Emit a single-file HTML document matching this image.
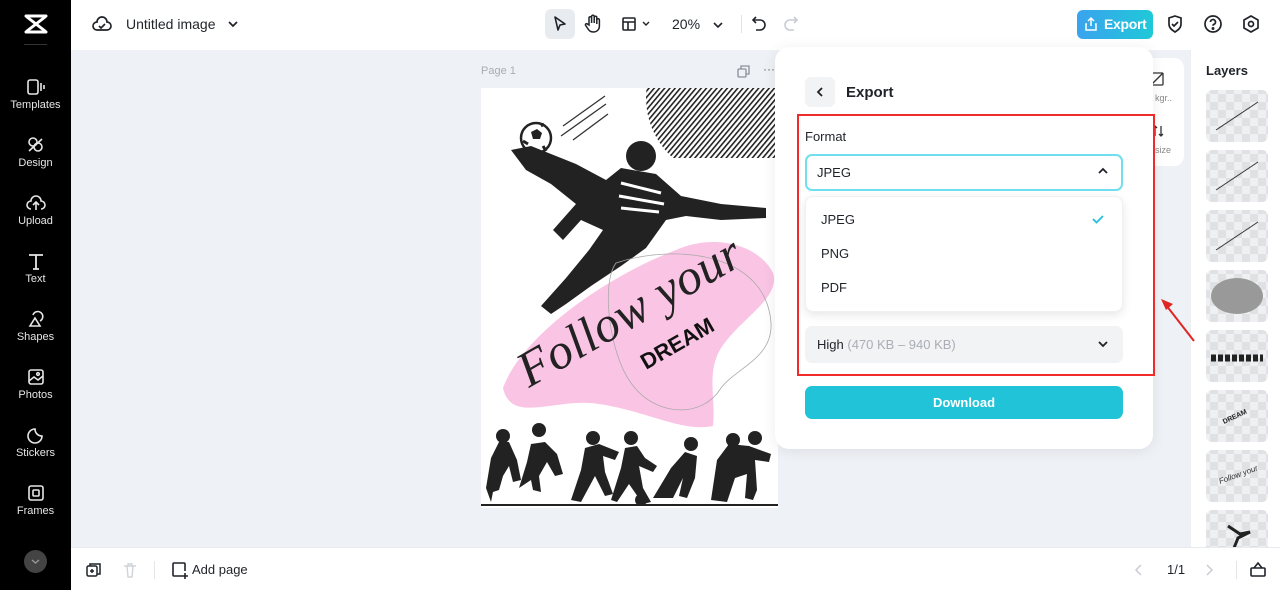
<!DOCTYPE html>
<html><head><meta charset="utf-8">
<style>
*{box-sizing:border-box;margin:0;padding:0}
body{width:1280px;height:595px;overflow:hidden;background:#fff;font-family:"Liberation Sans",sans-serif;position:relative;color:#1f2329}
.abs{position:absolute}
#side{left:0;top:0;width:71px;height:590px;background:#000}
.si{position:absolute;left:0;width:71px;text-align:center;color:#e6e6e6;font-size:11px}
.si svg{display:block;margin:0 auto 3px}
#top{left:71px;top:0;width:1209px;height:50px;background:#fff}
#canvas{left:71px;top:50px;width:1119px;height:497px;background:#eef1f5}
#bottom{left:71px;top:547px;width:1209px;height:48px;background:#fff;border-top:1px solid #e8eaed}
#layers{left:1190px;top:50px;width:90px;height:497px;background:#fff;border-left:1px solid #eceef1}
.th{position:absolute;left:15px;width:62px;height:52px;border-radius:6px;background-color:#eef0f2;
background-image:linear-gradient(45deg,#dfe1e4 25%,transparent 25%,transparent 75%,#dfe1e4 75%),linear-gradient(45deg,#dfe1e4 25%,transparent 25%,transparent 75%,#dfe1e4 75%);
background-size:16px 16px;background-position:4px 4px,12px 12px;overflow:hidden}
#panel{left:775px;top:47px;width:378px;height:402px;background:#fff;border-radius:14px;box-shadow:0 2px 14px rgba(0,0,0,.08)}
</style></head><body>

<div id="side" class="abs">
  <svg class="abs" style="left:23px;top:13px" width="26" height="22" viewBox="0 0 26 22"><path d="M3 3h20M3 19h20M4 4l18 14M22 4L4 18" fill="none" stroke="#fff" stroke-width="3" stroke-linecap="round"/></svg>
  <div class="abs" style="left:24px;top:44px;width:23px;height:1px;background:#333"></div>
  <div class="si" style="top:78px"><svg width="20" height="18" viewBox="0 0 20 18" fill="none" stroke="#e6e6e6" stroke-width="1.6"><rect x="2" y="2" width="10" height="14" rx="2"/><path d="M15 5v8M18 7v4"/></svg>Templates</div>
  <div class="si" style="top:136px"><svg width="20" height="18" viewBox="0 0 20 18" fill="none" stroke="#e6e6e6" stroke-width="1.6"><circle cx="7" cy="6" r="4"/><circle cx="12" cy="11" r="4"/><path d="M3 15l13-12"/></svg>Design</div>
  <div class="si" style="top:194px"><svg width="22" height="18" viewBox="0 0 22 18" fill="none" stroke="#e6e6e6" stroke-width="1.6"><path d="M6 15a4 4 0 0 1 0-8 5 5 0 0 1 10 0 4 4 0 0 1 0 8"/><path d="M11 16V9M8 11l3-3 3 3"/></svg>Upload</div>
  <div class="si" style="top:252px"><svg width="20" height="18" viewBox="0 0 20 18" fill="none" stroke="#e6e6e6" stroke-width="1.8"><path d="M3 3h14M10 3v14M7 17h6"/></svg>Text</div>
  <div class="si" style="top:310px"><svg width="20" height="18" viewBox="0 0 20 18" fill="none" stroke="#e6e6e6" stroke-width="1.6"><path d="M7 5a5 5 0 1 1 7 6"/><path d="M9 8l5 8H4z"/></svg>Shapes</div>
  <div class="si" style="top:368px"><svg width="20" height="18" viewBox="0 0 20 18" fill="none" stroke="#e6e6e6" stroke-width="1.6"><rect x="3" y="2" width="14" height="14" rx="2"/><path d="M3 13l5-4 4 3 5-4"/><circle cx="12" cy="6" r="1.3"/></svg>Photos</div>
  <div class="si" style="top:426px"><svg width="20" height="18" viewBox="0 0 20 18" fill="none" stroke="#e6e6e6" stroke-width="1.6"><path d="M16 10a7 7 0 1 1-7-7c0 4 3 7 7 7z"/></svg>Stickers</div>
  <div class="si" style="top:484px"><svg width="20" height="18" viewBox="0 0 20 18" fill="none" stroke="#e6e6e6" stroke-width="1.6"><rect x="3" y="2" width="14" height="14" rx="2"/><rect x="7" y="6" width="6" height="6" rx="1"/></svg>Frames</div>
  <div class="abs" style="left:24px;top:550px;width:23px;height:23px;border-radius:50%;background:#444"><svg width="23" height="23" viewBox="0 0 23 23"><path d="M8 10l3.5 3 3.5-3" fill="none" stroke="#999" stroke-width="1.4"/></svg></div>
</div>
<div class="abs" style="left:71px;top:272px;width:7px;height:48px;background:#2a2a2a;border-radius:0 6px 6px 0"></div>

<div id="top" class="abs">
  <svg class="abs" style="left:20px;top:15px" width="22" height="18" viewBox="0 0 22 18" fill="none" stroke="#1f2329" stroke-width="1.7"><path d="M6 15a4 4 0 0 1 0-8 5 5 0 0 1 10 0 4 4 0 0 1 0 8z"/><path d="M8 11l2 2 4-4"/></svg>
  <div class="abs" style="left:55px;top:16px;font-size:14px;color:#1f2329">Untitled image</div>
  <svg class="abs" style="left:156px;top:18px" width="12" height="12" viewBox="0 0 12 12"><path d="M2 4l4 4 4-4" fill="none" stroke="#1f2329" stroke-width="1.7"/></svg>
  <div class="abs" style="left:474px;top:9px;width:30px;height:30px;border-radius:6px;background:#e8ebef"></div>
  <svg class="abs" style="left:481px;top:15px" width="16" height="18" viewBox="0 0 16 18"><path d="M3 2l10 7-5 1-2 5z" fill="none" stroke="#1f2329" stroke-width="1.6" stroke-linejoin="round"/></svg>
  <svg class="abs" style="left:513px;top:14px" width="18" height="20" viewBox="0 0 18 20" fill="none" stroke="#1f2329" stroke-width="1.5"><path d="M5 11V4a1.3 1.3 0 0 1 2.6 0v5V2.5a1.3 1.3 0 0 1 2.6 0V9V3.5a1.3 1.3 0 0 1 2.6 0V10V6a1.3 1.3 0 0 1 2.6 0v6c0 4-3 6-6 6s-4-1-6-4l-2-3a1.2 1.2 0 0 1 2-1z"/></svg>
  <svg class="abs" style="left:550px;top:16px" width="16" height="16" viewBox="0 0 16 16" fill="none" stroke="#1f2329" stroke-width="1.6"><rect x="2" y="2" width="12" height="12" rx="1"/><path d="M2 6h12M7 6v8"/></svg>
  <svg class="abs" style="left:570px;top:19px" width="10" height="10" viewBox="0 0 10 10"><path d="M2 3l3 3 3-3" fill="none" stroke="#1f2329" stroke-width="1.4"/></svg>
  <div class="abs" style="left:601px;top:16px;font-size:14px">20%</div>
  <svg class="abs" style="left:641px;top:19px" width="12" height="12" viewBox="0 0 12 12"><path d="M2 4l4 4 4-4" fill="none" stroke="#1f2329" stroke-width="1.6"/></svg>
  <div class="abs" style="left:670px;top:15px;width:1px;height:18px;background:#e0e3e7"></div>
  <svg class="abs" style="left:680px;top:15px" width="16" height="18" viewBox="0 0 16 18" fill="none" stroke="#1f2329" stroke-width="1.6"><path d="M5 2L2 5l3 3"/><path d="M2 5h7a5 5 0 0 1 0 10H5"/></svg>
  <svg class="abs" style="left:712px;top:15px" width="16" height="18" viewBox="0 0 16 18" fill="none" stroke="#c8ccd2" stroke-width="1.6"><path d="M11 2l3 3-3 3"/><path d="M14 5H7a5 5 0 0 0 0 10h4"/></svg>
  <div class="abs" style="left:1006px;top:10px;width:76px;height:29px;border-radius:6px;background:linear-gradient(90deg,#3aa3ee,#1fc8d8);color:#fff;font-size:14px;font-weight:bold;padding:6px 0 0 27px;letter-spacing:-0.3px">Export</div>
  <svg class="abs" style="left:1013px;top:16px" width="14" height="16" viewBox="0 0 14 16" fill="none" stroke="#fff" stroke-width="1.5"><path d="M7 10V2M4 5l3-3 3 3M3 8H2v6h10V8h-1"/></svg>
  <svg class="abs" style="left:1095px;top:14px" width="18" height="20" viewBox="0 0 18 20" fill="none" stroke="#1f2329" stroke-width="1.7"><path d="M9 2l6 2v6c0 4-3 6-6 8-3-2-6-4-6-8V4z"/><path d="M6 10l2 2 4-4"/></svg>
  <svg class="abs" style="left:1132px;top:14px" width="20" height="20" viewBox="0 0 20 20" fill="none" stroke="#1f2329" stroke-width="1.7"><circle cx="10" cy="10" r="8"/><path d="M7.5 8a2.5 2.5 0 1 1 3.5 2.3c-.7.3-1 .8-1 1.5"/><circle cx="10" cy="14.5" r=".6" fill="#1f2329"/></svg>
  <svg class="abs" style="left:1170px;top:14px" width="20" height="20" viewBox="0 0 20 20" fill="none" stroke="#1f2329" stroke-width="1.7"><path d="M10 2l7 4v8l-7 4-7-4V6z"/><circle cx="10" cy="10" r="2.5"/></svg>
</div>

<div id="canvas" class="abs"></div>
<div class="abs" style="left:481px;top:65px;font-size:11px;color:#a8adb5">Page 1</div>
<svg class="abs" style="left:737px;top:65px" width="13" height="13" viewBox="0 0 13 13" fill="none" stroke="#8a9099" stroke-width="1.3"><rect x="1" y="4" width="8" height="8" rx="1"/><path d="M4 4V1h8v8H9"/></svg>
<div class="abs" style="left:763px;top:62px;font-size:12px;color:#666">···</div>

<svg class="abs" style="left:481px;top:88px" width="297" height="420" viewBox="0 0 297 420">
 <rect width="297" height="420" fill="#fff"/>
 <defs><pattern id="st" width="4" height="4" patternUnits="userSpaceOnUse" patternTransform="rotate(40)"><rect width="1.6" height="4" fill="#222"/></pattern>
 <clipPath id="cc"><circle cx="245" cy="10" r="80"/></clipPath></defs>
 <rect x="160" y="0" width="137" height="70" fill="url(#st)" clip-path="url(#cc)"/>
 <path d="M82 38l42-30M80 48l45-32M92 52l35-26" stroke="#333" stroke-width="1.3"/>
 <circle cx="55" cy="50" r="15" fill="#fff" stroke="#222" stroke-width="2.5"/>
 <path d="M50 44l6-3 5 4-2 6h-7z" fill="#222"/>
 <path d="M42 53l5 3M62 58l3 5M60 38l3-2" stroke="#222" stroke-width="3"/>
 <path d="M30 62L50 58L95 76L125 92L140 80L175 86L200 108L240 116L285 120L285 130L240 132L205 128L185 132L165 160L140 178L110 198L85 216L70 226L60 218L85 190L108 162L122 142L100 132L82 152L72 142L95 116L70 96L45 82Z" fill="#222"/>
 <path d="M140 95l40 10M138 108l45 8M140 120l38 4" stroke="#fff" stroke-width="3"/>
 <circle cx="160" cy="68" r="15" fill="#222"/>
 <path d="M22 300C40 250 120 190 200 160C240 145 280 160 292 185C300 210 260 230 240 260C225 285 235 310 232 338C200 345 160 320 110 315C70 312 30 335 22 300Z" fill="#fac4e4"/>
 <path d="M135 175c60-20 150-10 155 60 2 35-35 45-50 65-18 30-65 30-90-5-22-30-30-100-15-120z" fill="none" stroke="#aaa" stroke-width=".8"/>
 <text x="48" y="300" transform="rotate(-30 48 300)" font-family="Liberation Serif,serif" font-style="italic" font-size="50" fill="#222" textLength="250">Follow your</text>
 <text x="165" y="282" transform="rotate(-30 165 282)" font-family="Liberation Sans,sans-serif" font-weight="bold" font-size="22" fill="#111">DREAM</text>
 <g fill="#222">
  <circle cx="22" cy="348" r="7"/><path d="M5 400l5-30 8-16h10l8 18 4 20-8 2-4-16-6 10-4 14-6 2-2 10z"/>
  <circle cx="58" cy="342" r="7"/><path d="M38 400l8-26 4-18 14-2 12 12 6 20-8 2-8-14-8 14 2 16-8-2-2-10z"/>
  <circle cx="112" cy="350" r="7"/><path d="M90 412l10-30 4-22 14-4 20 8-4 8-12-4 2 16 8 22-8 2-10-20-14 26z"/>
  <circle cx="150" cy="350" r="7"/><path d="M130 412l10-32 4-20 12-2 8 12 12 8-4 6-14-6 4 22 8 14-8 2-14-20-12 18z"/>
  <circle cx="160" cy="412" r="6"/>
  <circle cx="210" cy="356" r="7"/><path d="M172 410l18-30 14-16 12 4-2 22-8 20-8-2 4-18-10 20z"/>
  <circle cx="252" cy="352" r="7"/><circle cx="274" cy="350" r="7"/>
  <path d="M230 412l6-40 12-16 20 2 22 8-2 8-14-2 2 30-4 10-8-2 2-24-12 4-8 24z"/>
  <rect x="0" y="416" width="297" height="2"/>
 </g>
</svg>

<div id="layers" class="abs">
  <div class="abs" style="left:15px;top:13px;font-size:13px;font-weight:bold;color:#1f2329">Layers</div>
  <div class="th" style="top:40px"><svg width="62" height="52"><path d="M10 40l42-28" stroke="#333" stroke-width="1"/></svg></div>
  <div class="th" style="top:100px"><svg width="62" height="52"><path d="M10 40l42-28" stroke="#333" stroke-width="1"/></svg></div>
  <div class="th" style="top:160px"><svg width="62" height="52"><path d="M10 40l42-28" stroke="#333" stroke-width="1"/></svg></div>
  <div class="th" style="top:220px"><svg width="62" height="52"><ellipse cx="31" cy="26" rx="26" ry="18" fill="#999"/></svg></div>
  <div class="th" style="top:280px"><svg width="62" height="52"><path d="M5 28h52" stroke="#222" stroke-width="7" stroke-dasharray="5 2"/></svg></div>
  <div class="th" style="top:340px"><svg width="62" height="52"><text x="18" y="34" transform="rotate(-25 18 34)" font-size="7" font-weight="bold" fill="#222">DREAM</text></svg></div>
  <div class="th" style="top:400px"><svg width="62" height="52"><text x="14" y="34" transform="rotate(-20 14 34)" font-size="8" font-style="italic" fill="#333">Follow your</text></svg></div>
  <div class="th" style="top:460px"><svg width="62" height="52"><path d="M22 16l12 8 10-2-12 6-4 10" stroke="#222" stroke-width="3" fill="none"/></svg></div>
</div>

<div class="abs" style="left:1130px;top:58px;width:54px;height:108px;background:#fff;border-radius:10px"></div>
<svg class="abs" style="left:1150px;top:72px" width="14" height="14" viewBox="0 0 14 14" fill="none" stroke="#333" stroke-width="1.3"><rect x="1" y="1" width="12" height="12" rx="1"/><path d="M1 13L13 1"/></svg>
<div class="abs" style="left:1155px;top:93px;font-size:9px;color:#888">kgr..</div>
<svg class="abs" style="left:1152px;top:124px" width="12" height="14" viewBox="0 0 12 14" fill="none" stroke="#333" stroke-width="1.3"><path d="M3 2v10M1 4l2-2 2 2M9 2v10M7 10l2 2 2-2"/></svg>
<div class="abs" style="left:1155px;top:145px;font-size:9px;color:#888">size</div>

<div id="panel" class="abs">
  <div class="abs" style="left:30px;top:30px;width:30px;height:30px;border-radius:6px;background:#f1f3f5"></div>
  <svg class="abs" style="left:40px;top:39px" width="10" height="12" viewBox="0 0 10 12"><path d="M7 2L3 6l4 4" fill="none" stroke="#1f2329" stroke-width="1.8"/></svg>
  <div class="abs" style="left:71px;top:37px;font-size:15px;font-weight:bold;color:#1f2329">Export</div>
  <div class="abs" style="left:30px;top:82px;font-size:13px;color:#1f2329">Format</div>
  <div class="abs" style="left:30px;top:107px;width:318px;height:37px;border:2px solid #6fdff0;border-radius:7px"></div>
  <div class="abs" style="left:42px;top:118px;font-size:13px;color:#1f2329">JPEG</div>
  <svg class="abs" style="left:322px;top:119px" width="12" height="10" viewBox="0 0 12 10"><path d="M2 7l4-4 4 4" fill="none" stroke="#1f2329" stroke-width="1.8"/></svg>
  <div class="abs" style="left:30px;top:214px;font-size:13px;color:#1f2329">Quality</div>
  <div class="abs" style="left:30px;top:279px;width:318px;height:37px;background:#f1f3f5;border-radius:7px"></div>
  <div class="abs" style="left:42px;top:290px;font-size:13px;color:#1f2329">High <span style="color:#a9aeb5">(470 KB – 940 KB)</span></div>
  <svg class="abs" style="left:322px;top:292px" width="12" height="10" viewBox="0 0 12 10"><path d="M2 3l4 4 4-4" fill="none" stroke="#1f2329" stroke-width="1.8"/></svg>
  <div class="abs" style="left:30px;top:149px;width:318px;height:116px;background:#fff;border-radius:8px;box-shadow:0 3px 10px rgba(0,0,0,.1);border:1px solid #eef0f2"></div>
  <div class="abs" style="left:46px;top:165px;font-size:13px;color:#1f2329">JPEG</div>
  <svg class="abs" style="left:316px;top:166px" width="14" height="12" viewBox="0 0 14 12"><path d="M2 6l3.5 3.5L12 3" fill="none" stroke="#1fc2d8" stroke-width="1.8"/></svg>
  <div class="abs" style="left:46px;top:199px;font-size:13px;color:#1f2329">PNG</div>
  <div class="abs" style="left:46px;top:233px;font-size:13px;color:#1f2329">PDF</div>
  <div class="abs" style="left:30px;top:339px;width:318px;height:33px;background:#20c3d7;border-radius:7px;color:#fff;font-size:13px;font-weight:bold;text-align:center;line-height:33px">Download</div>
</div>

<div class="abs" style="left:797px;top:114px;width:358px;height:262px;border:2px solid #ef2b2b"></div>
<svg class="abs" style="left:1158px;top:295px" width="40" height="52" viewBox="0 0 40 52"><path d="M36 46L8 10" stroke="#e02525" stroke-width="2"/><path d="M3 4l12 5-7 6z" fill="#e02525"/></svg>

<div id="bottom" class="abs">
  <svg class="abs" style="left:15px;top:14px" width="16" height="16" viewBox="0 0 16 16" fill="none" stroke="#1f2329" stroke-width="1.5"><rect x="1" y="4" width="10" height="10" rx="1.5"/><path d="M4 4V2h10v10h-3M6 7v4M4 9h4"/></svg>
  <svg class="abs" style="left:52px;top:14px" width="14" height="16" viewBox="0 0 14 16" fill="none" stroke="#cfd3d8" stroke-width="1.4"><path d="M1 4h12M4 4l1 11h4l1-11M5 4V2h4v2"/></svg>
  <div class="abs" style="left:83px;top:13px;width:1px;height:18px;background:#e3e5e8"></div>
  <svg class="abs" style="left:100px;top:13px" width="17" height="18" viewBox="0 0 17 18" fill="none" stroke="#1f2329" stroke-width="1.6"><path d="M11 15H3a1 1 0 0 1-1-1V3a1 1 0 0 1 1-1h10a1 1 0 0 1 1 1v7M14 12v6M11 15h6"/></svg>
  <div class="abs" style="left:121px;top:14px;font-size:13px;color:#1f2329">Add page</div>
  <svg class="abs" style="left:1063px;top:15px" width="10" height="14" viewBox="0 0 10 14"><path d="M7 2L2 7l5 5" fill="none" stroke="#c9ccd1" stroke-width="1.5"/></svg>
  <div class="abs" style="left:1096px;top:14px;font-size:13px;color:#1f2329">1/1</div>
  <svg class="abs" style="left:1133px;top:15px" width="10" height="14" viewBox="0 0 10 14"><path d="M3 2l5 5-5 5" fill="none" stroke="#c9ccd1" stroke-width="1.5"/></svg>
  <div class="abs" style="left:1165px;top:13px;width:1px;height:18px;background:#e3e5e8"></div>
  <svg class="abs" style="left:1178px;top:12px" width="18" height="18" viewBox="0 0 18 18" fill="none" stroke="#1f2329" stroke-width="1.6"><rect x="2" y="8" width="14" height="8" rx="1"/><path d="M5 8l4-5 4 5"/></svg>
</div>
</body></html>
